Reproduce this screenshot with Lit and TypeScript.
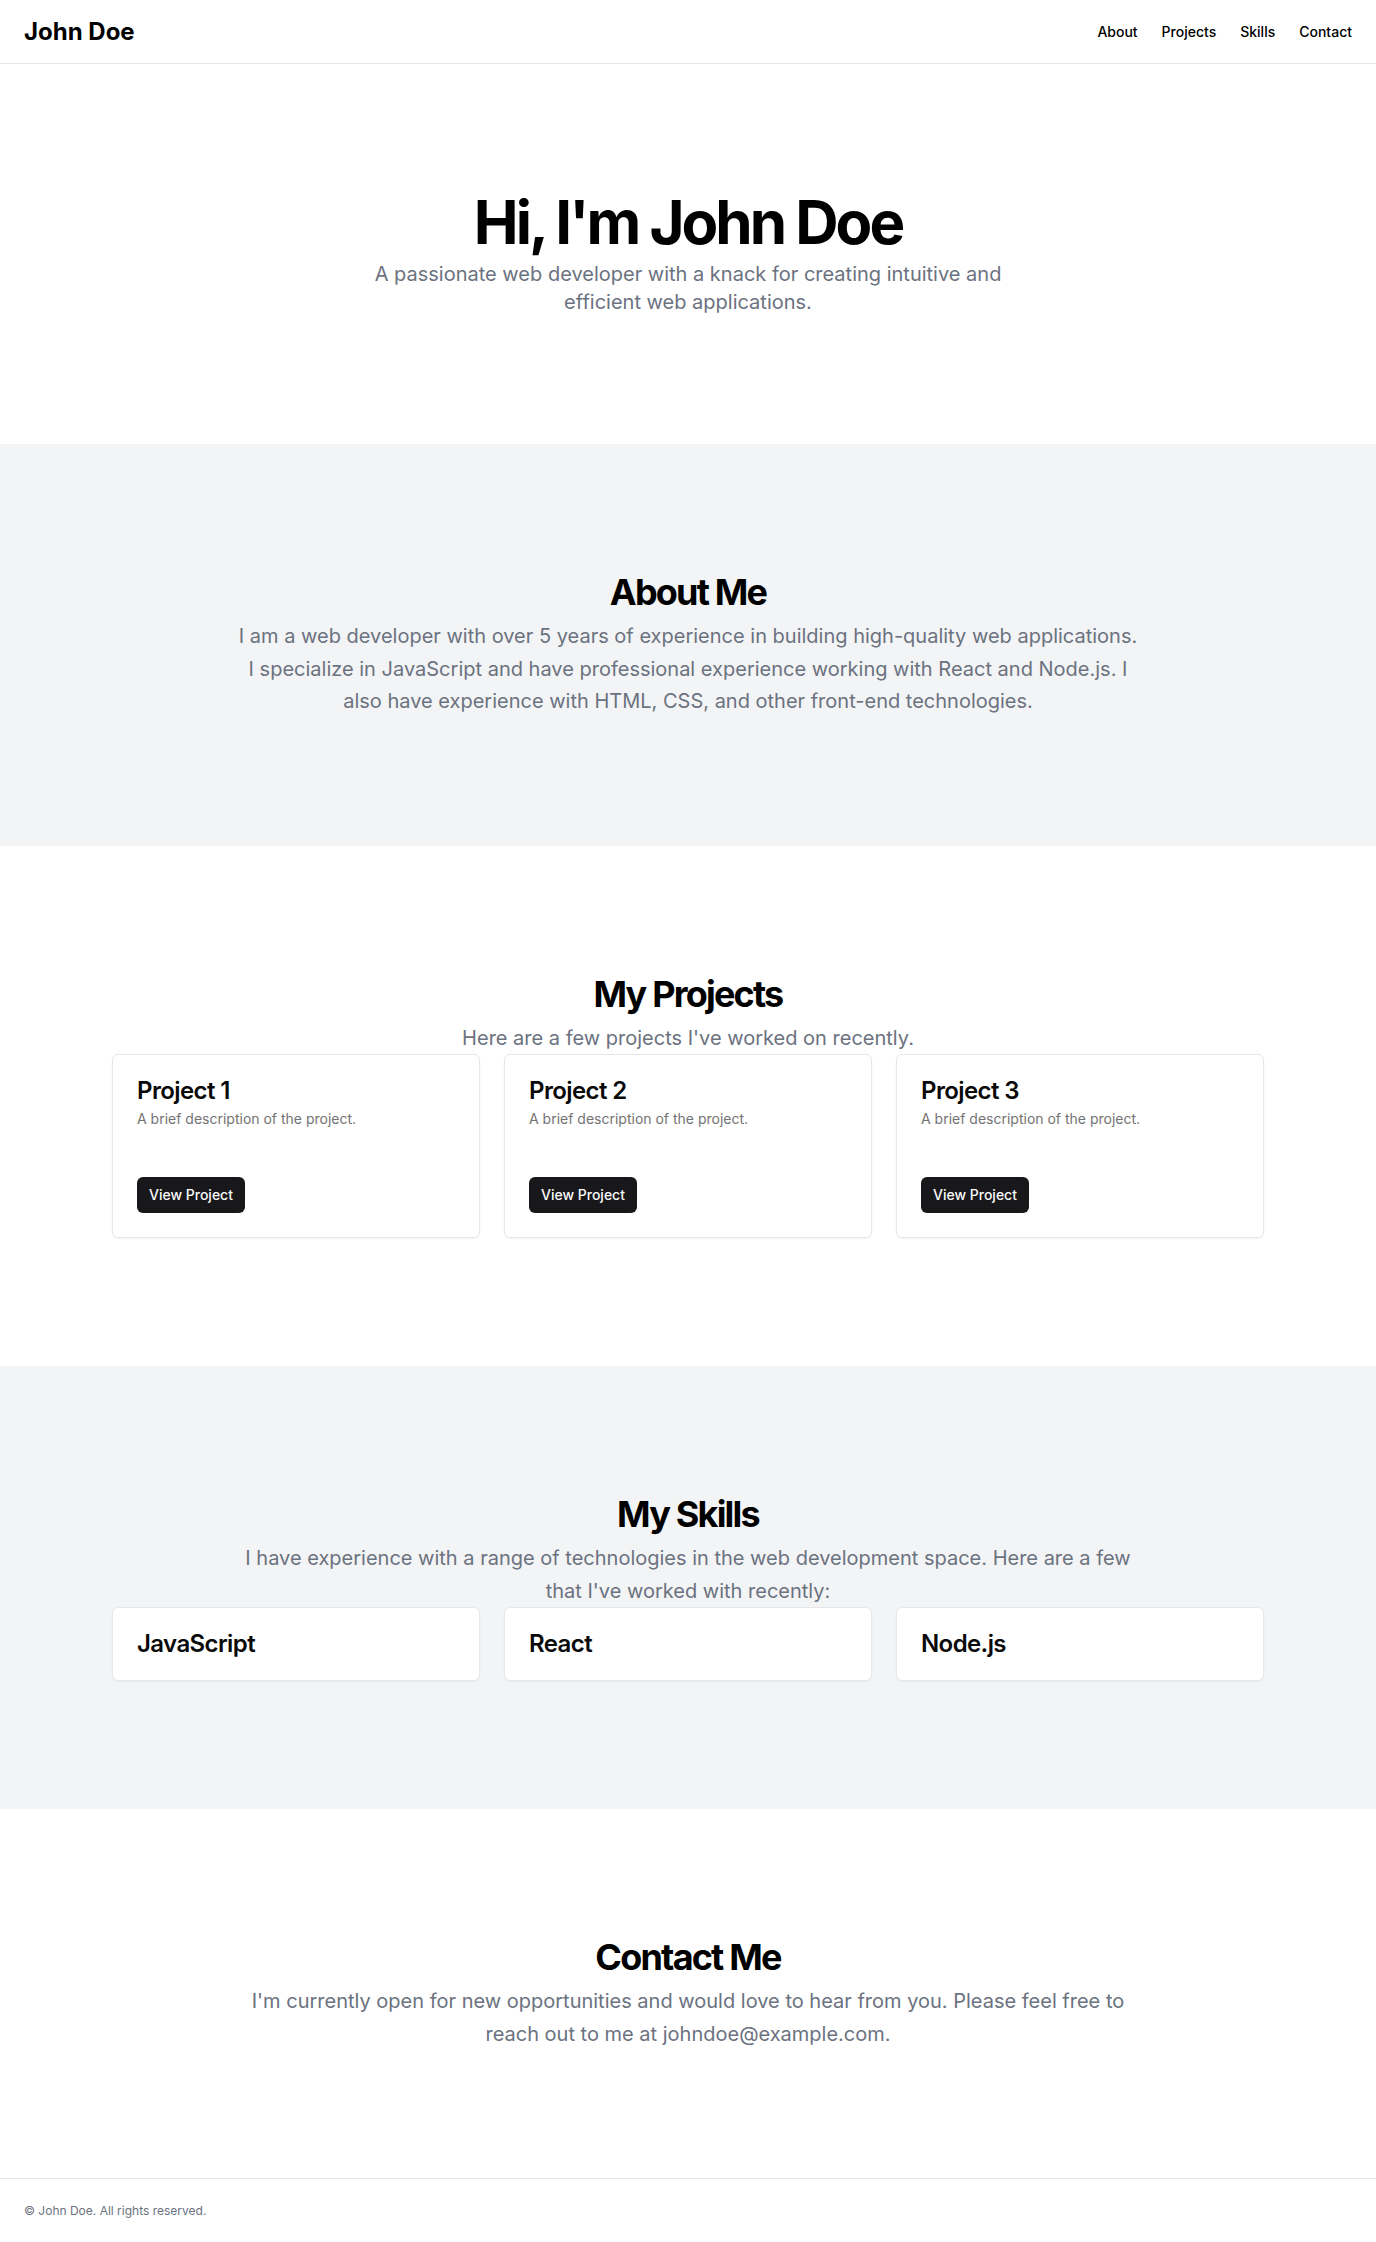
import { LitElement, html, css } from "lit";
import { customElement } from "lit/decorators.js";

const links = ["About", "Projects", "Skills", "Contact"];
const projects = ["Project 1", "Project 2", "Project 3"];
const skills = ["JavaScript", "React", "Node.js"];

@customElement("app-root")
export class AppRoot extends LitElement {
  static styles = css`
    :host {
      display: block;
      font-family: Inter, sans-serif;
      font-size: 16px;
      line-height: 24px;
      color: #000;
      background: #fff;
    }
    *, *::before, *::after { box-sizing: border-box; }
    h1, h2, h3, p { margin: 0; }
    a { color: inherit; text-decoration: none; }
    .header {
      display: flex;
      align-items: center;
      justify-content: space-between;
      min-height: 64px;
      padding: 0 24px;
      border-bottom: 1px solid #e5e7eb;
    }
    .brand { font-size: 24px; line-height: 32px; font-weight: 700; }
    .nav { display: flex; gap: 24px; font-size: 14px; line-height: 20px; font-weight: 500; }
    .section { padding: 128px 24px; }
    .tinted { background: #f3f4f6; }
    .intro {
      display: flex;
      flex-direction: column;
      align-items: center;
      gap: 8px;
      text-align: center;
    }
    .name { font-size: 60px; line-height: 60px; font-weight: 700; letter-spacing: -0.05em; }
    .title { font-size: 36px; line-height: 40px; font-weight: 700; letter-spacing: -0.05em; }
    .lead { max-width: 700px; font-size: 20px; line-height: 28px; color: #6b7280; }
    .text { max-width: 900px; font-size: 20px; line-height: 1.625; color: #6b7280; }
    .grid {
      display: grid;
      grid-template-columns: repeat(3, 1fr);
      gap: 24px;
      max-width: 1152px;
      margin: 0 auto;
    }
    .card {
      padding: 24px;
      border: 1px solid #e5e7eb;
      border-radius: 6px;
      background: #fff;
      color: #0a0a0a;
      box-shadow: 0 1px 2px rgba(0, 0, 0, 0.05);
    }
    .card-title { font-size: 24px; line-height: 24px; font-weight: 600; letter-spacing: -0.025em; }
    .card-text { margin-top: 6px; font-size: 14px; line-height: 20px; color: #737373; }
    .button {
      display: block;
      height: 36px;
      margin-top: 48px;
      padding: 0 12px;
      border: 0;
      border-radius: 6px;
      background: #18181b;
      color: #fafafa;
      font: 500 14px/20px Inter, sans-serif;
      cursor: pointer;
    }
    .footer {
      display: flex;
      align-items: center;
      min-height: 64px;
      padding: 0 24px;
      border-top: 1px solid #e5e7eb;
      font-size: 12px;
      line-height: 16px;
      color: #6b7280;
    }
    @media (max-width: 800px) { .grid { grid-template-columns: 1fr; } }
  `;

  render() {
    return html`
      <header class="header">
        <a class="brand" href="#">John Doe</a>
        <nav class="nav">${links.map((l) => html`<a href="#${l.toLowerCase()}">${l}</a>`)}</nav>
      </header>
      <main>
        <section class="section intro">
          <h1 class="name">Hi, I'm John Doe</h1>
          <p class="lead">A passionate web developer with a knack for creating intuitive and efficient web applications.</p>
        </section>
        <section class="section tinted" id="about">
          <div class="intro">
            <h2 class="title">About Me</h2>
            <p class="text">I am a web developer with over 5 years of experience in building high-quality web applications. I specialize in JavaScript and have professional experience working with React and Node.js. I also have experience with HTML, CSS, and other front-end technologies.</p>
          </div>
        </section>
        <section class="section" id="projects">
          <div class="intro">
            <h2 class="title">My Projects</h2>
            <p class="text">Here are a few projects I've worked on recently.</p>
          </div>
          <div class="grid">
            ${projects.map((p) => html`
              <article class="card">
                <h3 class="card-title">${p}</h3>
                <p class="card-text">A brief description of the project.</p>
                <button class="button" type="button">View Project</button>
              </article>`)}
          </div>
        </section>
        <section class="section tinted" id="skills">
          <div class="intro">
            <h2 class="title">My Skills</h2>
            <p class="text">I have experience with a range of technologies in the web development space. Here are a few that I've worked with recently:</p>
          </div>
          <div class="grid">
            ${skills.map((s) => html`<article class="card"><h3 class="card-title">${s}</h3></article>`)}
          </div>
        </section>
        <section class="section" id="contact">
          <div class="intro">
            <h2 class="title">Contact Me</h2>
            <p class="text">I'm currently open for new opportunities and would love to hear from you. Please feel free to reach out to me at johndoe@example.com.</p>
          </div>
        </section>
      </main>
      <footer class="footer"><p>© John Doe. All rights reserved.</p></footer>
    `;
  }
}
